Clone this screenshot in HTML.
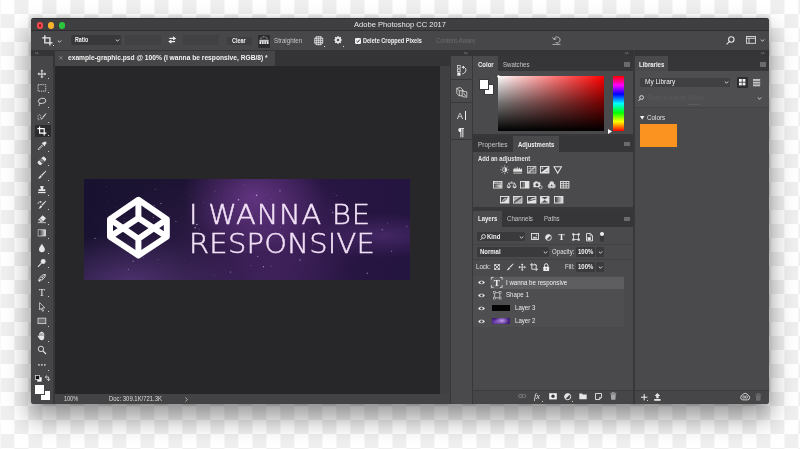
<!DOCTYPE html>
<html lang="en">
<head>
<meta charset="utf-8">
<title>Adobe Photoshop CC 2017</title>
<style>
*{box-sizing:border-box;margin:0;padding:0}
html,body{width:800px;height:449px;overflow:hidden}
body{position:relative;font-family:"Liberation Sans",sans-serif;font-size:7.5px;color:#e6e6e6;
 background-color:#fff;
 background-image:conic-gradient(#efefef 0 25%,#fff 0 50%,#efefef 0 75%,#fff 0);
 background-size:28px 28px;background-position:.4px 0;}
#win{position:absolute;left:31px;top:18px;width:738.3px;height:386px;border-radius:3px;overflow:hidden;background:#38383a;
 }
#shadow{position:absolute;left:31px;top:18px;width:738.3px;height:386px;border-radius:3px;
 box-shadow:0 13px 24px 1px rgba(0,0,0,.40),0 0 4px rgba(0,0,0,.2);}
#in{position:absolute;left:-31px;top:-18px;width:800px;height:449px;filter:blur(.45px);will-change:transform}
.a{position:absolute}
.t{position:absolute;white-space:nowrap;line-height:10px;height:10px;font-size:6.8px;transform-origin:0 50%;transform:scaleX(var(--sx,.9))}
.b{font-weight:bold;--sx:.88}
svg{position:absolute;overflow:visible}
/* regions */
#title{left:31px;top:18px;width:739px;height:13px;background:#3f3f41;border-bottom:1px solid #2e2e30;border-top:.6px solid #303032}
#opts{left:31px;top:31px;width:739px;height:18.7px;background:#474749}
#strip{left:31px;top:49.7px;width:739px;height:6.5px;background:#343436}
#tools{left:31px;top:56px;width:21.7px;height:348px;background:#464648}
#tabbar{left:52.7px;top:50px;width:397px;height:15.5px;background:#343436}
#tab{left:54.5px;top:50.5px;width:220px;height:15px;background:#464648}
#canvas{left:54.5px;top:65.5px;width:385.5px;height:328px;background:#272729}
#status{left:54.5px;top:393.5px;width:395px;height:10.5px;background:#434345}
#gap1{left:440px;top:65.5px;width:9.5px;height:328px;background:#404042}
#icons{left:451px;top:56px;width:20.5px;height:348px;background:#4a4a4c}
.pbar{background:#363638}
.pbody{background:#4a4a4c}
.ptab{background:#4a4a4c}
.field{background:#3a3a3c;border-radius:1.5px}
</style>
</head>
<body>
<div id="shadow"></div>
<div id="win"><div id="in">

<!-- title bar -->
<div class="a" id="title"></div>
<div class="a" style="left:37px;top:22.4px;width:6.2px;height:6.2px;border-radius:50%;background:#fc4a4e"></div>
<div class="a" style="left:38.9px;top:24.3px;width:2.4px;height:2.4px;border-radius:50%;background:#8e1418"></div>
<div class="a" style="left:48px;top:22.4px;width:6.2px;height:6.2px;border-radius:50%;background:#fdb22b"></div>
<div class="a" style="left:59.1px;top:22.4px;width:6.2px;height:6.2px;border-radius:50%;background:#2bc63c"></div>
<div class="t" id="ttl" style="left:353.8px;top:19.8px;font-size:7.6px;color:#eaeaea;--sx:.995">Adobe Photoshop CC 2017</div>

<!-- options bar -->
<div class="a" id="opts"></div>

<!-- strip + tools -->
<div class="a" id="strip"></div>
<div class="a" id="tools"></div>

<!-- document -->
<div class="a" id="tabbar"></div>
<div class="a" id="tab"></div>
<div class="a" id="canvas"></div>
<div class="a" id="status"></div>

<!-- right side -->
<div class="a" id="gap1"></div>
<div class="a" id="icons"></div>

<!-- COLOR PANEL -->
<div class="a pbar" style="left:473px;top:56px;width:159.5px;height:15px"></div>
<div class="a ptab" style="left:473px;top:56px;width:25px;height:15px"></div>
<div class="a pbody" style="left:473px;top:71px;width:159.5px;height:63px"></div>
<div class="t b" style="left:478px;top:59.5px;color:#f0f0f0">Color</div>
<div class="t" style="left:503px;top:59.5px;color:#c8c8c8">Swatches</div>
<div class="a" style="left:623.5px;top:62px;width:6px;height:4.5px;background:#6a6a6c"></div>
<!-- fg/bg swatches -->
<div class="a" style="left:483.5px;top:84px;width:10.5px;height:10.5px;background:#fff;border:.7px solid #3a3a3c"></div>
<div class="a" style="left:478.5px;top:79px;width:10.5px;height:10.5px;background:#fff;border:.7px solid #3a3a3c"></div>
<!-- picker -->
<div class="a" style="left:498px;top:76px;width:106px;height:55px;background:linear-gradient(to bottom,rgba(0,0,0,0),rgba(0,0,0,.56) 50%,#000),linear-gradient(to right,#fff,#f00)"></div>
<div class="a" style="left:497px;top:75px;width:3px;height:3px;border-radius:50%;border:.7px solid #fff"></div>
<div class="a" style="left:612.5px;top:76px;width:11.5px;height:55px;background:linear-gradient(to bottom,#f00 0%,#f0f 17%,#00f 33%,#0ff 50%,#0f0 67%,#ff0 83%,#f00 100%)"></div>
<svg style="left:607.5px;top:128.5px" width="4" height="5" viewBox="0 0 4 5"><path d="M0 0L4 2.5L0 5z" fill="#fff"/></svg>

<!-- ADJUSTMENTS PANEL -->
<div class="a pbar" style="left:473px;top:135.5px;width:159.5px;height:16px"></div>
<div class="a ptab" style="left:513px;top:135.5px;width:46px;height:16px"></div>
<div class="a pbody" style="left:473px;top:151.5px;width:159.5px;height:55px"></div>
<div class="t" style="left:478px;top:139.5px;color:#c8c8c8;--sx:.95">Properties</div>
<div class="t b" style="left:518px;top:139.5px;color:#f0f0f0">Adjustments</div>
<div class="a" style="left:623.5px;top:141.5px;width:6px;height:4.5px;background:#6a6a6c"></div>
<div class="t b" style="left:478px;top:153.8px;font-size:6.6px;color:#e4e4e4">Add an adjustment</div>

<!-- LAYERS PANEL -->
<div class="a pbar" style="left:473px;top:210.5px;width:159.5px;height:16.5px"></div>
<div class="a ptab" style="left:473px;top:210.5px;width:29px;height:16.5px"></div>
<div class="a pbody" style="left:473px;top:227px;width:159.5px;height:177px"></div>
<div class="t b" style="left:478px;top:214px;color:#f0f0f0">Layers</div>
<div class="t" style="left:506.5px;top:214px;color:#c8c8c8">Channels</div>
<div class="t" style="left:543.5px;top:214px;color:#c8c8c8">Paths</div>
<div class="a" style="left:623.5px;top:216.5px;width:6px;height:4.5px;background:#6a6a6c"></div>

<!-- LIBRARIES PANEL -->
<div class="a" style="left:632.5px;top:50px;width:2.5px;height:354px;background:#38383a"></div>
<div class="a pbar" style="left:635px;top:56px;width:135px;height:15px"></div>
<div class="a ptab" style="left:635px;top:56px;width:33px;height:15px"></div>
<div class="a pbody" style="left:635px;top:71px;width:135px;height:333px"></div>
<div class="t b" style="left:639px;top:59.5px;color:#f0f0f0">Libraries</div>
<div class="a" style="left:759.5px;top:62px;width:6px;height:4.5px;background:#6a6a6c"></div>

<!-- OPTIONS BAR CONTENT -->
<svg style="left:42px;top:35px" width="11" height="11" viewBox="0 0 11 11" fill="none" stroke="#e8e8e8" stroke-width="1.3"><path d="M2.8 0.3V7.8H10.6M0.2 2.8H7.9V10.6"/></svg>
<div class="a" style="left:53px;top:45px;width:1.2px;height:1.2px;background:#ddd"></div>
<svg style="left:57px;top:39.5px" width="5" height="3" viewBox="0 0 5 3" fill="none" stroke="#d4d4d4" stroke-width="1"><path d="M.8 .5L2.5 2.2L4.2 .5"/></svg>
<div class="a field" style="left:70.8px;top:34.8px;width:50px;height:10.6px;background:#38383a"></div>
<div class="t b" style="left:75px;top:35.2px;color:#f0f0f0;--sx:.78">Ratio</div>
<svg style="left:115px;top:39.2px" width="5" height="3" viewBox="0 0 5 3" fill="none" stroke="#d4d4d4" stroke-width="1"><path d="M.8 .5L2.5 2.2L4.2 .5"/></svg>
<div class="a field" style="left:125.2px;top:35px;width:36px;height:10.2px;background:#414143"></div>
<svg style="left:167.8px;top:36px" width="8.4" height="8" viewBox="0 0 9 8"><path d="M1.4 2.3H6" stroke="#f0f0f0" stroke-width="1.3"/><path d="M5.4 0L8.8 2.3L5.4 4.6z" fill="#f0f0f0"/><path d="M7.6 5.7H3" stroke="#f0f0f0" stroke-width="1.3"/><path d="M3.6 3.4L.2 5.7L3.6 8z" fill="#f0f0f0"/></svg>
<div class="a field" style="left:183px;top:35px;width:36px;height:10.2px;background:#414143"></div>
<div class="a field" style="left:226.6px;top:36.6px;width:25.4px;height:8.6px;background:#3f3f41"></div>
<div class="t b" style="left:232.2px;top:36px;color:#f0f0f0;--sx:.8">Clear</div>
<div class="a" style="left:257.5px;top:35.2px;width:12.3px;height:12.4px;background:#2c2c2e;border-radius:1px"></div>
<svg style="left:258.7px;top:36.4px" width="10" height="9" viewBox="0 0 10 9"><path d="M.5 3.8H9.5V8H.5z" fill="#f4f4f4"/><path d="M1.6 3C2.8 0 7.2 0 8.4 3" fill="none" stroke="#e0e0e0" stroke-width=".7" stroke-dasharray="1 .6"/><path d="M2.6 5.4V8M5 5.4V8M7.4 5.4V8" stroke="#2c2c2e" stroke-width=".8"/><path d="M.5 4.9H9.5" stroke="#2c2c2e" stroke-width=".4"/></svg>
<div class="t" style="left:274px;top:36.2px;color:#c6c6c6;--sx:.91">Straighten</div>
<svg style="left:314.3px;top:36.4px" width="9.4" height="9.4" viewBox="0 0 10 10" fill="none" stroke="#e4e4e4" stroke-width=".85"><path d="M2.9 .2V9.8M5 .2V9.8M7.1 .2V9.8M.2 2.9H9.8M.2 5H9.8M.2 7.1H9.8"/><rect x=".8" y=".8" width="8.4" height="8.4" rx="2.6"/></svg>
<div class="a" style="left:323.5px;top:46px;width:1.2px;height:1.2px;background:#ddd"></div>
<svg style="left:333.5px;top:36.3px" width="8" height="8" viewBox="0 0 8 8"><circle cx="4" cy="4" r="2.3" fill="none" stroke="#ececec" stroke-width="1.5"/><path d="M4 0V8M0 4H8M1.2 1.2L6.8 6.8M6.8 1.2L1.2 6.8" stroke="#ececec" stroke-width="1.2"/><circle cx="4" cy="4" r="1.2" fill="#474749"/></svg>
<div class="a" style="left:342.5px;top:46px;width:1.2px;height:1.2px;background:#ddd"></div>
<div class="a" style="left:354.6px;top:37.6px;width:6.2px;height:6.2px;background:#f2f2f2;border-radius:1.2px"></div>
<svg style="left:355.7px;top:38.7px" width="4.2" height="4.2" viewBox="0 0 4 4" fill="none" stroke="#222" stroke-width=".9"><path d="M.5 2L1.6 3.1L3.6 .6"/></svg>
<div class="t b" style="left:363px;top:36.2px;color:#f0f0f0;--sx:.82">Delete Cropped Pixels</div>
<div class="t" style="left:436px;top:36.2px;color:#6c6c6e;--sx:.875">Content-Aware</div>
<svg style="left:552px;top:36px" width="9" height="9" viewBox="0 0 9 9" fill="none" stroke="#bdbdbd" stroke-width=".9"><path d="M2.2 3.2A3 3 0 1 1 3.6 6.6"/><path d="M.6 1.4L2 3.6L4.4 2.8" /><path d="M.5 8.4H8.5"/></svg>
<svg style="left:726px;top:35.8px" width="9" height="9" viewBox="0 0 9 9" fill="none" stroke="#e4e4e4" stroke-width="1.1"><circle cx="5.3" cy="3.5" r="2.7"/><path d="M3.4 5.6L.6 8.4"/></svg>
<svg style="left:745.5px;top:36.3px" width="10" height="8" viewBox="0 0 10 8" fill="none" stroke="#dcdcdc" stroke-width=".9"><rect x=".5" y=".5" width="9" height="6.8"/><path d="M.5 2.3H9.5M3 2.3V7.3"/></svg>
<svg style="left:760px;top:39.3px" width="5" height="3" viewBox="0 0 5 3" fill="none" stroke="#d4d4d4" stroke-width="1"><path d="M.8 .5L2.5 2.2L4.2 .5"/></svg>

<!-- strip handles -->
<svg style="left:34.6px;top:51.8px" width="3.6" height="2.4" viewBox="0 0 3.6 2.4" fill="none" stroke="#9a9a9c" stroke-width=".6"><path d="M.3 .2L1.3 1.2L.3 2.2M2.1 .2L3.1 1.2L2.1 2.2"/></svg>
<svg style="left:464.4px;top:51.8px" width="3.6" height="2.4" viewBox="0 0 3.6 2.4" fill="none" stroke="#9a9a9c" stroke-width=".6"><path d="M.3 .2L1.3 1.2L.3 2.2M2.1 .2L3.1 1.2L2.1 2.2"/></svg>
<svg style="left:625px;top:51.8px" width="3.6" height="2.4" viewBox="0 0 3.6 2.4" fill="none" stroke="#9a9a9c" stroke-width=".6"><path d="M.3 .2L1.3 1.2L.3 2.2M2.1 .2L3.1 1.2L2.1 2.2"/></svg>
<svg style="left:760.8px;top:51.8px" width="3.6" height="2.4" viewBox="0 0 3.6 2.4" fill="none" stroke="#9a9a9c" stroke-width=".6"><path d="M.3 .2L1.3 1.2L.3 2.2M2.1 .2L3.1 1.2L2.1 2.2"/></svg>

<!-- DOC TAB -->
<svg style="left:58.6px;top:56.2px" width="3.8" height="3.8" viewBox="0 0 4 4" stroke="#a0a0a2" stroke-width=".7"><path d="M.3 .3L3.7 3.7M3.7 .3L.3 3.7"/></svg>
<div class="t b" id="doctitle" style="left:67.8px;top:53.2px;font-size:7.5px;color:#f2f2f2;--sx:.888">example-graphic.psd @ 100% (I wanna be responsive, RGB/8) *</div>

<!-- STATUS -->
<div class="t" style="left:64px;top:393.8px;font-size:6.3px;color:#dcdcdc;--sx:.87">100%</div>
<div class="t" style="left:109px;top:393.8px;font-size:6.3px;color:#dcdcdc;--sx:.94">Doc: 309.1K/721.3K</div>
<svg style="left:185px;top:396.5px" width="3" height="5" viewBox="0 0 3 5" fill="none" stroke="#cfcfcf" stroke-width=".7"><path d="M.4 .4L2.4 2.5L.4 4.6"/></svg>

<!-- TOOLS -->
<div class="a" style="left:34.5px;top:125px;width:16px;height:11.5px;background:#2c2c2e;border-radius:1px"></div>
<svg style="left:36.6px;top:68.7px" width="9.8" height="9.8" viewBox="0 0 12 12"><path d="M6 .6L7.9 2.8H6.6V5.4H9.2V4.1L11.4 6L9.2 7.9V6.6H6.6V9.2H7.9L6 11.4L4.1 9.2H5.4V6.6H2.8V7.9L.6 6L2.8 4.1V5.4H5.4V2.8H4.1z" fill="#e6e6e6"/></svg>
<div class="a" style="left:48.3px;top:78.2px;width:1.1px;height:1.1px;background:#d0d0d0"></div>
<svg style="left:36.6px;top:82.7px" width="9.8" height="9.8" viewBox="0 0 12 12"><rect x="1.3" y="2" width="9.4" height="8" fill="none" stroke="#e6e6e6" stroke-width="1" stroke-dasharray="1.7 1"/></svg>
<div class="a" style="left:48.3px;top:92.2px;width:1.1px;height:1.1px;background:#d0d0d0"></div>
<svg style="left:36.6px;top:97.4px" width="9.8" height="9.8" viewBox="0 0 12 12"><ellipse cx="6.3" cy="4.8" rx="4.6" ry="3.2" fill="none" stroke="#e6e6e6" stroke-width="1" transform="rotate(-12 6 5)"/><path d="M3.4 7.4C2.2 8.6 3.4 9.6 2.4 11" fill="none" stroke="#e6e6e6" stroke-width="1"/></svg>
<div class="a" style="left:48.3px;top:106.9px;width:1.1px;height:1.1px;background:#d0d0d0"></div>
<svg style="left:36.6px;top:112.1px" width="9.8" height="9.8" viewBox="0 0 12 12"><path d="M1.3 4.6C1.3 2.6 4.3 2.6 4.5 4.4C4.8 7 3.6 9.6 1.3 9.6z" fill="none" stroke="#e6e6e6" stroke-width=".8" stroke-dasharray="1.2 .8"/><path d="M10.9 1.6L11.5 2.2L7.6 7L6.6 6.2z" fill="#e6e6e6"/><path d="M6.2 6.6L7.3 7.5C6.6 9.2 5.2 9.4 4.2 9.3C5.2 8.6 5.2 7.4 6.2 6.6z" fill="#e6e6e6"/></svg>
<div class="a" style="left:48.3px;top:121.6px;width:1.1px;height:1.1px;background:#d0d0d0"></div>
<svg style="left:36.6px;top:125.7px" width="9.8" height="9.8" viewBox="0 0 12 12"><path d="M3.2 .6V8.7H11.5M.5 3.2H8.8V11.5" fill="none" stroke="#fff" stroke-width="1.4"/></svg>
<div class="a" style="left:48.3px;top:135.2px;width:1.1px;height:1.1px;background:#d0d0d0"></div>
<svg style="left:36.6px;top:141.1px" width="9.8" height="9.8" viewBox="0 0 12 12"><path d="M8.2 1.2C9.2 .2 10.6 .4 11.2 1.2C11.8 2 11.8 3.2 10.8 3.9L9.6 5L10.2 5.6L9.4 6.4L5.6 2.6L6.4 1.8L7 2.4z" fill="#e6e6e6"/><path d="M6.6 4.4L2 9L1.4 10.6L3 10L7.6 5.4" fill="none" stroke="#e6e6e6" stroke-width=".9"/></svg>
<div class="a" style="left:48.3px;top:150.6px;width:1.1px;height:1.1px;background:#d0d0d0"></div>
<svg style="left:36.6px;top:155.5px" width="9.8" height="9.8" viewBox="0 0 12 12"><g transform="rotate(-45 6 6)"><rect x=".4" y="3.2" width="11.2" height="5.6" rx="1.6" fill="#e6e6e6"/><rect x="4" y="3.2" width="4" height="5.6" fill="#474749"/><circle cx="5.2" cy="5" r=".5" fill="#e6e6e6"/><circle cx="6.8" cy="5" r=".5" fill="#e6e6e6"/><circle cx="5.2" cy="7" r=".5" fill="#e6e6e6"/><circle cx="6.8" cy="7" r=".5" fill="#e6e6e6"/><circle cx="6" cy="6" r=".5" fill="#e6e6e6"/></g></svg>
<div class="a" style="left:48.3px;top:165.0px;width:1.1px;height:1.1px;background:#d0d0d0"></div>
<svg style="left:36.6px;top:170.1px" width="9.8" height="9.8" viewBox="0 0 12 12"><path d="M10.6 .8L11.3 1.5L6.2 7.2L5 6z" fill="#e6e6e6"/><path d="M4.5 6.5L5.8 7.8C5 10 3 10.8 1 10.8C2.6 9.6 2.8 7.6 4.5 6.5z" fill="#e6e6e6"/></svg>
<div class="a" style="left:48.3px;top:179.6px;width:1.1px;height:1.1px;background:#d0d0d0"></div>
<svg style="left:36.6px;top:185.1px" width="9.8" height="9.8" viewBox="0 0 12 12"><path d="M4.6 1.2H7.4C8 1.2 8.2 1.8 8 2.4L7.3 5.2H10.2V7.4H1.8V5.2H4.7L4 2.4C3.8 1.8 4 1.2 4.6 1.2z" fill="#e6e6e6"/><rect x="1.4" y="8.4" width="9.2" height="1.6" fill="#e6e6e6"/></svg>
<div class="a" style="left:48.3px;top:194.6px;width:1.1px;height:1.1px;background:#d0d0d0"></div>
<svg style="left:36.6px;top:199.5px" width="9.8" height="9.8" viewBox="0 0 12 12"><path d="M10.6 .8L11.3 1.5L6.6 7L5.4 5.8z" fill="#e6e6e6"/><path d="M4.9 6.3L6.2 7.6C5.4 9.8 3.6 10.6 1.6 10.6C3.2 9.4 3.2 7.4 4.9 6.3z" fill="#e6e6e6"/><path d="M1 4.8C1.4 2.6 3.4 1.6 5.2 2.4" fill="none" stroke="#e6e6e6" stroke-width=".9"/><path d="M4.2 .9L6 2.7L3.7 3.4z" fill="#e6e6e6"/></svg>
<div class="a" style="left:48.3px;top:209.0px;width:1.1px;height:1.1px;background:#d0d0d0"></div>
<svg style="left:36.6px;top:214.1px" width="9.8" height="9.8" viewBox="0 0 12 12"><path d="M6.8 1.4L11 5.2L7.2 9.4H3.6L1.4 7.4z" fill="#e6e6e6"/><path d="M3.2 5.4L7.6 9.2" stroke="#474749" stroke-width=".9"/><path d="M4 7L2.3 8.5L3.6 9.4" fill="#474749"/><path d="M1 10.6H11" stroke="#e6e6e6" stroke-width=".9"/></svg>
<div class="a" style="left:48.3px;top:223.6px;width:1.1px;height:1.1px;background:#d0d0d0"></div>
<svg style="left:36.6px;top:228.3px" width="9.8" height="9.8" viewBox="0 0 12 12"><defs><linearGradient id="gg" x1="0" x2="1" y1="0" y2="0"><stop offset="0" stop-color="#1c1c1e"/><stop offset="1" stop-color="#e8e8e8"/></linearGradient></defs><rect x="1.4" y="2.2" width="9.2" height="7.6" fill="url(#gg)" stroke="#e6e6e6" stroke-width=".8"/></svg>
<div class="a" style="left:48.3px;top:237.8px;width:1.1px;height:1.1px;background:#d0d0d0"></div>
<svg style="left:36.6px;top:243.1px" width="9.8" height="9.8" viewBox="0 0 12 12"><path d="M6 1C7.4 3.6 9.6 5.6 9.6 7.8A3.6 3.6 0 0 1 2.4 7.8C2.4 5.6 4.6 3.6 6 1z" fill="#e6e6e6"/></svg>
<div class="a" style="left:48.3px;top:252.6px;width:1.1px;height:1.1px;background:#d0d0d0"></div>
<svg style="left:36.6px;top:257.5px" width="9.8" height="9.8" viewBox="0 0 12 12"><circle cx="7.6" cy="4.2" r="3" fill="#e6e6e6"/><path d="M5.4 6.4L1.2 10.8" stroke="#e6e6e6" stroke-width="1.3"/></svg>
<div class="a" style="left:48.3px;top:267.0px;width:1.1px;height:1.1px;background:#d0d0d0"></div>
<svg style="left:36.6px;top:272.9px" width="9.8" height="9.8" viewBox="0 0 12 12"><g transform="rotate(45 6 6)"><path d="M6 0C8.4 2.6 8.8 5.6 7.4 8.6H4.6C3.2 5.6 3.6 2.6 6 0z" fill="none" stroke="#e6e6e6" stroke-width="1"/><path d="M6 .6V4.6" stroke="#e6e6e6" stroke-width=".8"/><circle cx="6" cy="5.4" r="1" fill="#e6e6e6"/><rect x="4.4" y="9.4" width="3.2" height="2" fill="#e6e6e6"/></g></svg>
<div class="a" style="left:48.3px;top:282.4px;width:1.1px;height:1.1px;background:#d0d0d0"></div>
<svg style="left:36.6px;top:286.9px" width="9.8" height="9.8" viewBox="0 0 12 12"><text x="6" y="10.4" text-anchor="middle" font-family="Liberation Serif,serif" font-size="12.5" fill="#e6e6e6">T</text></svg>
<div class="a" style="left:48.3px;top:296.4px;width:1.1px;height:1.1px;background:#d0d0d0"></div>
<svg style="left:36.6px;top:301.7px" width="9.8" height="9.8" viewBox="0 0 12 12"><path d="M3.2 .8L9.6 7.2H6.2L8 10.8L6.8 11.4L5 7.8L3.2 9.8z" fill="#3a3a3c" stroke="#e6e6e6" stroke-width=".9" stroke-linejoin="round"/></svg>
<div class="a" style="left:48.3px;top:311.2px;width:1.1px;height:1.1px;background:#d0d0d0"></div>
<svg style="left:36.6px;top:316.1px" width="9.8" height="9.8" viewBox="0 0 12 12"><rect x="1.2" y="2.6" width="9.6" height="6.8" fill="#6a6a6c" stroke="#e6e6e6" stroke-width=".9"/></svg>
<div class="a" style="left:48.3px;top:325.6px;width:1.1px;height:1.1px;background:#d0d0d0"></div>
<svg style="left:36.6px;top:331.3px" width="9.8" height="9.8" viewBox="0 0 12 12"><path d="M2.8 6.6V3.2C2.8 2.4 4 2.4 4 3.2V1.8C4 1 5.2 1 5.2 1.8V1.2C5.2 .4 6.4 .4 6.4 1.2V1.8C6.4 1 7.6 1 7.6 1.8V3C7.6 2.2 8.8 2.2 8.8 3V7.6C8.8 10 7.8 11.2 6 11.2C4.2 11.2 3.4 10.4 2.4 8.8L1 6.6C.6 5.8 1.6 5.2 2.2 6z" fill="#e6e6e6"/><path d="M4 3.4V6M5.2 2.6V6M6.4 2.6V6M7.6 3.4V6" stroke="#474749" stroke-width=".5"/></svg>
<div class="a" style="left:48.3px;top:340.8px;width:1.1px;height:1.1px;background:#d0d0d0"></div>
<svg style="left:36.6px;top:345.3px" width="9.8" height="9.8" viewBox="0 0 12 12"><circle cx="4.8" cy="4.8" r="3.3" fill="none" stroke="#e6e6e6" stroke-width="1.1"/><path d="M7.2 7.2L11 11" stroke="#e6e6e6" stroke-width="1.5"/></svg>
<svg style="left:36.6px;top:360.1px" width="9.8" height="9.8" viewBox="0 0 12 12"><circle cx="2.4" cy="6" r="1" fill="#e6e6e6"/><circle cx="6" cy="6" r="1" fill="#e6e6e6"/><circle cx="9.6" cy="6" r="1" fill="#e6e6e6"/></svg>
<div class="a" style="left:48.3px;top:369.6px;width:1.1px;height:1.1px;background:#d0d0d0"></div>
<svg style="left:34.5px;top:374.5px" width="7" height="7" viewBox="0 0 7 7"><rect x="2.4" y="2.4" width="4" height="4" fill="#fff" stroke="#ddd" stroke-width=".5"/><rect x=".5" y=".5" width="4" height="4" fill="#111" stroke="#e6e6e6" stroke-width=".7"/></svg>
<svg style="left:43.5px;top:374.5px" width="7" height="7" viewBox="0 0 7 7" fill="none" stroke="#e6e6e6" stroke-width=".8"><path d="M1.6 2H4.6V5.4"/><path d="M2.8 .6L1.2 2L2.8 3.4M3.2 4L4.6 5.8L6 4" /></svg>
<div class="a" style="left:40px;top:390px;width:10.5px;height:10.5px;background:#fff;border:.7px solid #474749"></div>
<div class="a" style="left:34px;top:384.3px;width:10.7px;height:10.7px;background:#fff;border:.7px solid #474749"></div>

<!-- CANVAS IMAGE -->
<div class="a" id="art" style="left:83.7px;top:179.3px;width:326.8px;height:100.7px;overflow:hidden;background:
radial-gradient(ellipse 22% 55% at 52% 18%,rgba(108,58,140,.8),rgba(100,52,132,0) 100%),
radial-gradient(ellipse 30% 60% at 58% 55%,rgba(86,44,114,.6),rgba(86,44,114,0) 100%),
radial-gradient(ellipse 22% 22% at 92% 56%,rgba(92,54,128,.55),rgba(92,54,128,0) 100%),
radial-gradient(ellipse 34% 50% at 14% 104%,rgba(88,56,122,.85),rgba(88,56,122,0) 100%),
radial-gradient(ellipse 30% 45% at 55% 108%,rgba(74,40,104,.6),rgba(74,40,104,0) 100%),
radial-gradient(ellipse 30% 60% at 30% 60%,rgba(60,34,86,.35),rgba(60,34,86,0) 100%),
linear-gradient(to right,#181230 0%,#1d1333 30%,#2a1644 60%,#241440 100%)">
<svg style="left:0;top:0" width="326.8" height="100.7" viewBox="0 0 326.8 100.7"><circle cx="106.6" cy="16.6" r="0.35" fill="#e9d8ff" opacity="0.28"/><circle cx="175.1" cy="37.5" r="0.35" fill="#e9d8ff" opacity="0.66"/><circle cx="71.3" cy="10.3" r="0.60" fill="#e9d8ff" opacity="0.28"/><circle cx="31.3" cy="43.2" r="0.80" fill="#e9d8ff" opacity="0.31"/><circle cx="74.1" cy="62.9" r="0.35" fill="#e9d8ff" opacity="0.51"/><circle cx="130.1" cy="96.7" r="0.35" fill="#e9d8ff" opacity="0.50"/><circle cx="45.0" cy="42.7" r="0.80" fill="#e9d8ff" opacity="0.30"/><circle cx="101.6" cy="81.2" r="0.40" fill="#e9d8ff" opacity="0.30"/><circle cx="186.5" cy="20.2" r="0.35" fill="#e9d8ff" opacity="0.50"/><circle cx="22.3" cy="7.8" r="0.40" fill="#e9d8ff" opacity="0.47"/><circle cx="173.7" cy="77.4" r="0.60" fill="#e9d8ff" opacity="0.51"/><circle cx="148.4" cy="31.1" r="0.40" fill="#e9d8ff" opacity="0.56"/><circle cx="80.8" cy="57.7" r="0.80" fill="#e9d8ff" opacity="0.47"/><circle cx="112.9" cy="45.5" r="0.80" fill="#e9d8ff" opacity="0.69"/><circle cx="40.1" cy="42.6" r="0.50" fill="#e9d8ff" opacity="0.32"/><circle cx="159.9" cy="5.8" r="0.35" fill="#e9d8ff" opacity="0.59"/><circle cx="187.1" cy="86.9" r="0.50" fill="#e9d8ff" opacity="0.40"/><circle cx="115.1" cy="50.2" r="0.60" fill="#e9d8ff" opacity="0.28"/><circle cx="32.2" cy="28.2" r="0.35" fill="#e9d8ff" opacity="0.28"/><circle cx="228.6" cy="64.8" r="0.60" fill="#e9d8ff" opacity="0.38"/><circle cx="126.6" cy="66.9" r="0.35" fill="#e9d8ff" opacity="0.67"/><circle cx="116.8" cy="61.3" r="0.60" fill="#e9d8ff" opacity="0.28"/><circle cx="250.1" cy="14.5" r="0.40" fill="#e9d8ff" opacity="0.43"/><circle cx="298.1" cy="50.2" r="0.40" fill="#e9d8ff" opacity="0.45"/><circle cx="179.5" cy="87.7" r="0.60" fill="#e9d8ff" opacity="0.64"/><circle cx="91.9" cy="42.3" r="0.50" fill="#e9d8ff" opacity="0.56"/><circle cx="124.9" cy="24.4" r="0.35" fill="#e9d8ff" opacity="0.33"/><circle cx="76.9" cy="24.6" r="0.60" fill="#e9d8ff" opacity="0.62"/><circle cx="60.9" cy="29.3" r="0.40" fill="#e9d8ff" opacity="0.44"/><circle cx="121.3" cy="56.9" r="0.40" fill="#e9d8ff" opacity="0.56"/><circle cx="168.5" cy="61.9" r="0.35" fill="#e9d8ff" opacity="0.46"/><circle cx="283.3" cy="94.3" r="0.80" fill="#e9d8ff" opacity="0.43"/><circle cx="130.9" cy="12.0" r="0.60" fill="#e9d8ff" opacity="0.28"/><circle cx="23.8" cy="22.3" r="0.40" fill="#e9d8ff" opacity="0.30"/><circle cx="196.0" cy="11.9" r="0.80" fill="#e9d8ff" opacity="0.32"/><circle cx="34.8" cy="37.3" r="0.35" fill="#e9d8ff" opacity="0.28"/><circle cx="69.2" cy="38.5" r="0.50" fill="#e9d8ff" opacity="0.68"/><circle cx="196.5" cy="48.0" r="0.35" fill="#e9d8ff" opacity="0.63"/><circle cx="322.8" cy="47.2" r="0.60" fill="#e9d8ff" opacity="0.39"/><circle cx="48.5" cy="74.7" r="0.50" fill="#e9d8ff" opacity="0.47"/><circle cx="225.5" cy="52.1" r="0.40" fill="#e9d8ff" opacity="0.68"/><circle cx="172.6" cy="16.2" r="0.80" fill="#e9d8ff" opacity="0.66"/><circle cx="246.9" cy="30.9" r="0.35" fill="#e9d8ff" opacity="0.56"/><circle cx="86.3" cy="37.6" r="0.40" fill="#e9d8ff" opacity="0.41"/><circle cx="74.0" cy="54.5" r="0.80" fill="#e9d8ff" opacity="0.40"/><circle cx="74.0" cy="80.7" r="0.40" fill="#e9d8ff" opacity="0.61"/><circle cx="266.3" cy="73.8" r="0.40" fill="#e9d8ff" opacity="0.34"/><circle cx="161.2" cy="72.9" r="0.35" fill="#e9d8ff" opacity="0.61"/><circle cx="154.5" cy="20.8" r="0.80" fill="#e9d8ff" opacity="0.68"/><circle cx="146.5" cy="92.9" r="0.50" fill="#e9d8ff" opacity="0.68"/><circle cx="119.8" cy="23.4" r="0.40" fill="#e9d8ff" opacity="0.46"/><circle cx="111.1" cy="48.8" r="0.80" fill="#e9d8ff" opacity="0.63"/><circle cx="156.9" cy="65.3" r="0.35" fill="#e9d8ff" opacity="0.63"/><circle cx="40.7" cy="39.7" r="0.40" fill="#e9d8ff" opacity="0.47"/><circle cx="59.7" cy="78.5" r="0.50" fill="#e9d8ff" opacity="0.29"/><circle cx="307.6" cy="72.0" r="0.60" fill="#e9d8ff" opacity="0.43"/><circle cx="307.8" cy="72.3" r="0.40" fill="#e9d8ff" opacity="0.70"/><circle cx="10.9" cy="59.3" r="0.60" fill="#e9d8ff" opacity="0.61"/><circle cx="49.2" cy="82.2" r="0.60" fill="#e9d8ff" opacity="0.55"/><circle cx="115.2" cy="55.2" r="0.40" fill="#e9d8ff" opacity="0.26"/><circle cx="260.2" cy="72.5" r="0.35" fill="#e9d8ff" opacity="0.49"/><circle cx="303.6" cy="44.1" r="0.40" fill="#e9d8ff" opacity="0.62"/><circle cx="70.2" cy="26.4" r="0.50" fill="#e9d8ff" opacity="0.48"/><circle cx="248.7" cy="33.6" r="0.80" fill="#e9d8ff" opacity="0.44"/><circle cx="44.3" cy="90.3" r="0.50" fill="#e9d8ff" opacity="0.65"/><circle cx="216.0" cy="81.1" r="0.80" fill="#e9d8ff" opacity="0.44"/><circle cx="298.4" cy="50.7" r="0.80" fill="#e9d8ff" opacity="0.32"/><circle cx="166.9" cy="86.7" r="0.40" fill="#e9d8ff" opacity="0.52"/><circle cx="252.7" cy="16.5" r="0.40" fill="#e9d8ff" opacity="0.46"/><circle cx="236.2" cy="56.0" r="0.50" fill="#e9d8ff" opacity="0.56"/></svg>
</div>
<svg style="left:0;top:0" width="800" height="449" viewBox="0 0 800 449" fill="none" stroke="#fff" stroke-width="6" stroke-linejoin="round" stroke-linecap="round">
<path d="M138.4 199.7L166.8 219.2V236.7L138.4 255.4L110 236.7V219.2z"/>
<path d="M110 219.2L138.4 238.7L166.8 219.2M110 236.7L138.4 218L166.8 236.7M138.4 199.7V218M138.4 238.7V255.4" stroke-linecap="butt"/>
</svg>
<div class="a" id="h1" style="left:188.8px;top:199.4px;-webkit-text-stroke:.45px #f1e0f6;font-family:'DejaVu Sans','Liberation Sans',sans-serif;font-weight:200;font-size:25.8px;line-height:32px;white-space:nowrap;color:#f1e0f6;letter-spacing:.72px;transform-origin:0 0;transform:scaleX(1.12)">I WANNA BE</div>
<div class="a" id="h2" style="left:188.8px;top:227.8px;-webkit-text-stroke:.45px #f1e0f6;font-family:'DejaVu Sans','Liberation Sans',sans-serif;font-weight:200;font-size:25.8px;line-height:32px;white-space:nowrap;color:#f1e0f6;letter-spacing:.25px;transform-origin:0 0;transform:scaleX(1.12)">RESPONSIVE</div>

<!-- ICON STRIP -->
<div class="a" style="left:451px;top:78.6px;width:21px;height:1px;background:#38383a"></div>
<div class="a" style="left:451px;top:102.4px;width:21px;height:1px;background:#38383a"></div>
<div class="a" style="left:451px;top:139.2px;width:21px;height:1px;background:#38383a"></div>
<svg style="left:456.5px;top:64.5px" width="10" height="11" viewBox="0 0 10 11"><rect x=".6" y=".5" width="2.6" height="2.6" fill="none" stroke="#e6e6e6" stroke-width=".7"/><rect x=".6" y="4.1" width="2.6" height="2.6" fill="none" stroke="#e6e6e6" stroke-width=".7"/><rect x=".3" y="7.5" width="3.2" height="3.2" fill="#f0f0f0"/><path d="M5.4 2.2C8 1.6 9.6 4 8.6 6.2C8 7.6 6.8 8.6 5.4 9" fill="none" stroke="#e6e6e6" stroke-width="1"/><path d="M4.6 2.4L7 .6V3.8z" fill="#e6e6e6"/></svg>
<svg style="left:455.5px;top:86.5px" width="12" height="11" viewBox="0 0 12 11" fill="none" stroke="#e0e0e0" stroke-width=".8"><path d="M.8 1.2L4.6 .6L7.2 3.4V8.4L3.4 9L.8 6.2z"/><path d="M.8 1.2L3.4 4V9M3.4 4L7.2 3.4"/><path d="M6.2 4.2L10.8 4.8V10.2L6.2 9.6z" fill="#4a4a4c"/><path d="M7.4 5.8L9.6 9"/></svg>
<div class="t" style="left:457.4px;top:110.6px;font-size:9.4px;color:#f0f0f0;--sx:.95">A</div>
<div class="a" style="left:464.8px;top:111px;width:.9px;height:9px;background:#f0f0f0"></div>
<div class="t b" style="left:458px;top:126.8px;font-size:10.5px;color:#f0f0f0;--sx:1.1">¶</div>

<!-- ADJUSTMENT ICONS -->
<svg style="left:499.7px;top:165.9px" width="9.4" height="7.5" viewBox="0 0 10 8"><circle cx="5" cy="4" r="2.3" fill="none" stroke="#e4e4e4" stroke-width=".8"/><path d="M5 1.7A2.3 2.3 0 0 1 5 6.3z" fill="#e4e4e4"/><path d="M5 -.8V.6M5 7.4V8.8M.2 4H1.6M8.4 4H9.8M1.6 .6L2.6 1.6M7.4 6.4L8.4 7.4M8.4 .6L7.4 1.6M2.6 6.4L1.6 7.4" stroke="#e4e4e4" stroke-width=".7"/></svg>
<svg style="left:513.4px;top:165.9px" width="9.4" height="7.5" viewBox="0 0 10 8"><path d="M.3 6.2V4L1.3 1.8L2.2 4L3.2 1L4.2 4L5 .4L5.9 4L6.9 1.4L7.8 4L8.8 2L9.7 4V6.2z" fill="#e4e4e4"/><path d="M.3 7.6H9.7" stroke="#e4e4e4" stroke-width=".8"/></svg>
<svg style="left:526.7px;top:165.9px" width="9.4" height="7.5" viewBox="0 0 10 8"><rect x=".5" y=".5" width="9" height="7" fill="none" stroke="#e4e4e4" stroke-width=".8"/><path d="M3.5 .5V7.5M6.5 .5V7.5M.5 2.8H9.5M.5 5.2H9.5" stroke="#e4e4e4" stroke-width=".5"/><path d="M.8 7.2C4.5 6.6 5.5 1.6 9.2 .8" fill="none" stroke="#e4e4e4" stroke-width=".9"/></svg>
<svg style="left:540.2px;top:165.9px" width="9.4" height="7.5" viewBox="0 0 10 8"><rect x=".5" y=".5" width="9" height="7" fill="none" stroke="#e4e4e4" stroke-width="1"/><path d="M.5 7.5L9.5 .5V7.5z" fill="#e4e4e4"/><path d="M1.6 2.4H3.6M2.6 1.4V3.4" stroke="#e4e4e4" stroke-width=".6"/><path d="M6.2 5.8H8.2" stroke="#4a4a4c" stroke-width=".6"/></svg>
<svg style="left:553.1px;top:165.9px" width="9.4" height="7.5" viewBox="0 0 10 8"><path d="M1 .8H9L5 7.6z" fill="none" stroke="#e4e4e4" stroke-width="1.1"/></svg>
<svg style="left:492.9px;top:180.9px" width="9.4" height="7.5" viewBox="0 0 10 8"><rect x=".5" y=".5" width="9" height="7" fill="none" stroke="#e4e4e4" stroke-width="1"/><path d="M.5 2.2H9.5" stroke="#e4e4e4" stroke-width="1.2"/><path d="M3.3 .5V2.2M6.3 .5V2.2" stroke="#4a4a4c" stroke-width=".6"/><defs><linearGradient id="hs" x1="0" x2="1"><stop offset="0" stop-color="#555"/><stop offset="1" stop-color="#eee"/></linearGradient></defs><rect x="1" y="3.6" width="8" height="3.4" fill="url(#hs)"/></svg>
<svg style="left:506.7px;top:180.9px" width="9.4" height="7.5" viewBox="0 0 10 8"><path d="M5 .4V2M1.6 2.2H8.4" stroke="#e4e4e4" stroke-width=".9"/><path d="M.2 5.6L1.8 2.4L3.6 5.6A1.7 1.7 0 0 1 .2 5.6zM6.4 5.6L8.2 2.4L9.8 5.6A1.7 1.7 0 0 1 6.4 5.6z" fill="none" stroke="#e4e4e4" stroke-width=".8"/><path d="M.3 5.8H3.5A1.6 1.6 0 0 1 .3 5.8zM6.5 5.8H9.7A1.6 1.6 0 0 1 6.5 5.8z" fill="#e4e4e4"/></svg>
<svg style="left:519.9px;top:180.9px" width="9.4" height="7.5" viewBox="0 0 10 8"><rect x=".5" y=".5" width="9" height="7" fill="none" stroke="#e4e4e4" stroke-width="1"/><rect x="5" y=".5" width="4.5" height="7" fill="#e4e4e4"/><path d="M3.4 .5V7.5" stroke="#e4e4e4" stroke-width=".5"/></svg>
<svg style="left:533.1px;top:180.9px" width="9.4" height="7.5" viewBox="0 0 10 8"><rect x=".4" y="1.4" width="7.4" height="5.2" rx=".6" fill="#e4e4e4"/><rect x="2" y=".4" width="3" height="1.4" fill="#e4e4e4"/><circle cx="4.2" cy="4" r="1.6" fill="#4a4a4c"/><circle cx="8" cy="6.6" r="1.7" fill="#4a4a4c" stroke="#e4e4e4" stroke-width=".8"/></svg>
<svg style="left:546.6px;top:180.9px" width="9.4" height="7.5" viewBox="0 0 10 8"><circle cx="5" cy="2.8" r="2.5" fill="#e4e4e4" opacity=".95"/><circle cx="3.2" cy="5.4" r="2.5" fill="#e4e4e4" opacity=".8"/><circle cx="6.8" cy="5.4" r="2.5" fill="#e4e4e4" opacity=".8"/><circle cx="5" cy="4.6" r=".9" fill="#4a4a4c"/></svg>
<svg style="left:560.4px;top:180.9px" width="9.4" height="7.5" viewBox="0 0 10 8"><rect x=".5" y=".5" width="9" height="7" fill="none" stroke="#e4e4e4" stroke-width="1"/><path d="M3.5 .5V7.5M6.5 .5V7.5M.5 2.8H9.5M.5 5.2H9.5" stroke="#e4e4e4" stroke-width=".9"/></svg>
<svg style="left:499.7px;top:196.2px" width="9.4" height="7.5" viewBox="0 0 10 8"><rect x=".5" y=".5" width="9" height="7" fill="none" stroke="#e4e4e4" stroke-width="1"/><path d="M9.5 .5V7.5H.5z" fill="#e4e4e4"/><path d="M3 5.6C3.4 3.6 5 2.4 7 2.4" stroke="#e4e4e4" stroke-width="1" fill="none"/><path d="M3 5.6C5 5.6 6.6 4.4 7 2.4" stroke="#4a4a4c" stroke-width="1" fill="none"/></svg>
<svg style="left:513.4px;top:196.2px" width="9.4" height="7.5" viewBox="0 0 10 8"><rect x=".5" y=".5" width="9" height="7" fill="#9a9a9c" stroke="#e4e4e4" stroke-width="1"/><path d="M1 7L9 1" stroke="#4a4a4c" stroke-width="1.2"/><path d="M1 4.6L5 1.4M5 6.8L9 3.6" stroke="#c8c8c8" stroke-width=".9"/></svg>
<svg style="left:526.7px;top:196.2px" width="9.4" height="7.5" viewBox="0 0 10 8"><rect x=".5" y=".5" width="9" height="7" fill="none" stroke="#e4e4e4" stroke-width="1"/><path d="M.5 7.5V4.6L3 4.2L5.4 2.4L9.5 1.6V7.5z" fill="#e4e4e4"/><path d="M1 5.4L9 3.4" stroke="#4a4a4c" stroke-width="1"/></svg>
<svg style="left:540.2px;top:196.2px" width="9.4" height="7.5" viewBox="0 0 10 8"><rect x=".5" y=".5" width="9" height="7" fill="none" stroke="#e4e4e4" stroke-width="1"/><path d="M.5 .5L5 4L.5 7.5zM9.5 .5L5 4L9.5 7.5z" fill="#e4e4e4"/><path d="M.5 .5L9.5 7.5M9.5 .5L.5 7.5" stroke="#e4e4e4" stroke-width=".6"/></svg>
<svg style="left:553.7px;top:196.2px" width="9.4" height="7.5" viewBox="0 0 10 8"><defs><linearGradient id="gm" x1="0" x2="1"><stop offset="0" stop-color="#2e2e30"/><stop offset="1" stop-color="#f0f0f0"/></linearGradient></defs><rect x=".5" y=".5" width="9" height="7" fill="url(#gm)" stroke="#e4e4e4" stroke-width="1"/></svg>

<!-- LAYERS CONTENT -->
<div class="a field" style="left:477.4px;top:232.4px;width:47.6px;height:8.8px"></div>
<svg style="left:479.6px;top:233.6px" width="6" height="6.4" viewBox="0 0 6 6.4" fill="none" stroke="#e6e6e6" stroke-width=".9"><circle cx="3.6" cy="2.5" r="1.9"/><path d="M2.3 3.9L.4 6"/></svg>
<div class="t b" style="left:487.3px;top:231.8px;color:#f0f0f0">Kind</div>
<svg style="left:519.1px;top:235.6px" width="5" height="3" viewBox="0 0 5 3" fill="none" stroke="#d4d4d4" stroke-width="1"><path d="M.8 .5L2.5 2.2L4.2 .5"/></svg>
<svg style="left:530.8px;top:233.4px" width="8" height="7" viewBox="0 0 8 7"><rect x=".5" y=".5" width="7" height="6" fill="none" stroke="#e6e6e6" stroke-width=".9"/><path d="M1.4 5.4L3 3.4L4.2 4.6L5.2 3.8L6.6 5.4z" fill="#e6e6e6"/><circle cx="5.4" cy="2.2" r=".6" fill="#e6e6e6"/></svg>
<svg style="left:545.2px;top:233.5px" width="7" height="7" viewBox="0 0 7 7"><circle cx="3.5" cy="3.5" r="2.9" fill="none" stroke="#e6e6e6" stroke-width=".9"/><path d="M1.45 5.55A2.9 2.9 0 0 1 5.55 1.45z" fill="#e6e6e6"/></svg>
<div class="t b" style="left:558.6px;top:231.8px;font-family:'Liberation Serif',serif;font-size:9px;color:#f0f0f0;--sx:1">T</div>
<svg style="left:571.6px;top:233.0px" width="8" height="8" viewBox="0 0 8 8"><rect x="1.6" y="1.6" width="4.8" height="4.8" fill="none" stroke="#e6e6e6" stroke-width=".8"/><rect x=".3" y=".3" width="2" height="2" fill="#e6e6e6"/><rect x="5.7" y=".3" width="2" height="2" fill="#e6e6e6"/><rect x=".3" y="5.7" width="2" height="2" fill="#e6e6e6"/><rect x="5.7" y="5.7" width="2" height="2" fill="#e6e6e6"/></svg>
<svg style="left:585.8px;top:232.8px" width="7" height="8.4" viewBox="0 0 7 8.4"><path d="M.5 .5H4.4L6.5 2.6V7.9H.5z" fill="none" stroke="#e6e6e6" stroke-width=".9"/><path d="M4.2 .5V2.8H6.5" fill="none" stroke="#e6e6e6" stroke-width=".7"/><rect x="1.6" y="4.2" width="3.2" height="3" fill="#e6e6e6"/></svg>
<div class="a" style="left:600.3px;top:233.6px;width:4px;height:8px;border-radius:2px;background:#38383a"></div>
<div class="a" style="left:600.1px;top:231.9px;width:4.4px;height:4.4px;border-radius:50%;background:#f0f0f0"></div>
<div class="a" style="left:473px;top:243.6px;width:159.5px;height:.8px;background:#414143"></div>

<div class="a field" style="left:477.4px;top:247.2px;width:71.4px;height:9.6px"></div>
<div class="t b" style="left:479.6px;top:247px;color:#f0f0f0">Normal</div>
<svg style="left:543.0px;top:250.8px" width="5" height="3" viewBox="0 0 5 3" fill="none" stroke="#d4d4d4" stroke-width="1"><path d="M.8 .5L2.5 2.2L4.2 .5"/></svg>
<div class="t" style="left:551.8px;top:247px;color:#e0e0e0">Opacity:</div>
<div class="a field" style="left:576.3px;top:247.2px;width:18.4px;height:9.6px"></div>
<div class="t b" style="left:578.3px;top:247px;color:#f0f0f0">100%</div>
<div class="a field" style="left:596.4px;top:247.2px;width:7.6px;height:9.6px"></div>
<svg style="left:597.7px;top:250.8px" width="5" height="3" viewBox="0 0 5 3" fill="none" stroke="#d4d4d4" stroke-width="1"><path d="M.8 .5L2.5 2.2L4.2 .5"/></svg>
<div class="a" style="left:473px;top:259.4px;width:159.5px;height:.8px;background:#414143"></div>

<div class="t" style="left:476px;top:261.8px;color:#e0e0e0">Lock:</div>
<svg style="left:494px;top:263.8px" width="6" height="6" viewBox="0 0 6 6"><rect x=".3" y=".3" width="5.4" height="5.4" fill="none" stroke="#cfcfcf" stroke-width=".6"/><path d="M.3 .3H2.1V2.1H.3zM3.9 .3H5.7V2.1H3.9zM2.1 2.1H3.9V3.9H2.1zM.3 3.9H2.1V5.7H.3zM3.9 3.9H5.7V5.7H3.9z" fill="#d8d8d8"/></svg>
<svg style="left:505.6px;top:262.8px" width="8" height="8" viewBox="0 0 8 8"><path d="M7 .4L7.6 1L4.4 4.8L3.4 3.9z" fill="#e6e6e6"/><path d="M3 4.3L4 5.3C3.4 6.8 2 7.4 .6 7.4C1.8 6.6 1.8 5.1 3 4.3z" fill="#e6e6e6"/></svg>
<svg style="left:517.5px;top:262.6px" width="8.4" height="8.4" viewBox="0 0 12 12"><path d="M6 .6L7.9 2.8H6.6V5.4H9.2V4.1L11.4 6L9.2 7.9V6.6H6.6V9.2H7.9L6 11.4L4.1 9.2H5.4V6.6H2.8V7.9L.6 6L2.8 4.1V5.4H5.4V2.8H4.1z" fill="#e6e6e6"/></svg>
<svg style="left:529.8px;top:263px" width="8" height="8" viewBox="0 0 8 8" fill="none" stroke="#e6e6e6" stroke-width=".9"><path d="M1.8 0V6.2H8M0 1.8H6.2V8"/><path d="M4.6 .6L6.8 2.8" stroke-width=".7"/></svg>
<svg style="left:543.4px;top:262.6px" width="6.4" height="8.4" viewBox="0 0 6.4 8.4"><path d="M1.5 4V2.4A1.7 1.7 0 0 1 4.9 2.4V4" fill="none" stroke="#e6e6e6" stroke-width="1"/><rect x=".3" y="3.8" width="5.8" height="4.3" rx=".5" fill="#f0f0f0"/><rect x="2.8" y="5.2" width=".8" height="1.6" fill="#3a3a3c"/></svg>
<div class="t" style="left:565.2px;top:261.8px;color:#e0e0e0">Fill:</div>
<div class="a field" style="left:576.3px;top:262.2px;width:18.4px;height:9.6px"></div>
<div class="t b" style="left:578.3px;top:261.8px;color:#f0f0f0">100%</div>
<div class="a field" style="left:596.4px;top:262.2px;width:7.6px;height:9.6px"></div>
<svg style="left:597.7px;top:265.8px" width="5" height="3" viewBox="0 0 5 3" fill="none" stroke="#d4d4d4" stroke-width="1"><path d="M.8 .5L2.5 2.2L4.2 .5"/></svg>

<!-- layer rows -->
<div class="a" style="left:473px;top:276.4px;width:151px;height:50.8px;background:#4e4e50"></div>
<div class="a" style="left:490.2px;top:276.6px;width:133.8px;height:12px;background:#5e5e60"></div>
<svg style="left:478.2px;top:280.1px" width="7" height="5" viewBox="0 0 7 5"><path d="M.2 2.5C1.6 .2 5.4 .2 6.8 2.5C5.4 4.8 1.6 4.8 .2 2.5z" fill="#f2f2f2"/><circle cx="3.5" cy="2.5" r="1.25" fill="#3a3a3c"/></svg><svg style="left:478.2px;top:292.7px" width="7" height="5" viewBox="0 0 7 5"><path d="M.2 2.5C1.6 .2 5.4 .2 6.8 2.5C5.4 4.8 1.6 4.8 .2 2.5z" fill="#f2f2f2"/><circle cx="3.5" cy="2.5" r="1.25" fill="#3a3a3c"/></svg><svg style="left:478.2px;top:305.7px" width="7" height="5" viewBox="0 0 7 5"><path d="M.2 2.5C1.6 .2 5.4 .2 6.8 2.5C5.4 4.8 1.6 4.8 .2 2.5z" fill="#f2f2f2"/><circle cx="3.5" cy="2.5" r="1.25" fill="#3a3a3c"/></svg><svg style="left:478.2px;top:318.5px" width="7" height="5" viewBox="0 0 7 5"><path d="M.2 2.5C1.6 .2 5.4 .2 6.8 2.5C5.4 4.8 1.6 4.8 .2 2.5z" fill="#f2f2f2"/><circle cx="3.5" cy="2.5" r="1.25" fill="#3a3a3c"/></svg>
<svg style="left:491px;top:277.2px" width="11.6" height="10.8" viewBox="0 0 11.6 10.8"><path d="M.4 2.6V.4H2.6M9 .4H11.2V2.6M11.2 8.2V10.4H9M2.6 10.4H.4V8.2" fill="none" stroke="#e6e6e6" stroke-width=".8"/><text x="5.8" y="8.6" text-anchor="middle" font-family="Liberation Serif,serif" font-weight="bold" font-size="9" fill="#f2f2f2">T</text></svg>
<div class="t" style="left:505.7px;top:277.6px;color:#f0f0f0">I wanna be responsive</div>
<svg style="left:493px;top:290.8px" width="8.6" height="8.6" viewBox="0 0 8 8"><rect x="1.6" y="1.6" width="4.8" height="4.8" fill="none" stroke="#d8d8d8" stroke-width=".7"/><rect x=".5" y=".5" width="1.8" height="1.8" fill="#4e4e50" stroke="#d8d8d8" stroke-width=".5"/><rect x="5.7" y=".5" width="1.8" height="1.8" fill="#4e4e50" stroke="#d8d8d8" stroke-width=".5"/><rect x=".5" y="5.7" width="1.8" height="1.8" fill="#4e4e50" stroke="#d8d8d8" stroke-width=".5"/><rect x="5.7" y="5.7" width="1.8" height="1.8" fill="#4e4e50" stroke="#d8d8d8" stroke-width=".5"/></svg>
<div class="t" style="left:505.7px;top:290.2px;color:#e8e8e8">Shape 1</div>
<div class="a" style="left:492.3px;top:305px;width:18.2px;height:6.4px;background:#050505"></div>
<div class="t" style="left:514.6px;top:303.2px;color:#e8e8e8">Layer 3</div>
<div class="a" style="left:492.3px;top:317.8px;width:18.2px;height:6.4px;background:radial-gradient(ellipse 40% 70% at 55% 45%,#c79af0,rgba(140,80,200,0) 100%),radial-gradient(ellipse 30% 60% at 20% 70%,#7a4ac0,rgba(100,60,180,0) 100%),#3f1f7a"></div>
<div class="t" style="left:514.6px;top:316px;color:#e8e8e8">Layer 2</div>

<!-- layers bottom bar -->
<div class="a" style="left:473px;top:390.4px;width:159.5px;height:13.6px;background:#464648;border-top:.8px solid #3c3c3e"></div>
<svg style="left:518px;top:394.4px" width="8.4" height="4" viewBox="0 0 8.4 4" fill="none" stroke="#7e7e80" stroke-width=".9"><rect x=".5" y=".5" width="4" height="3" rx="1.5"/><rect x="3.9" y=".5" width="4" height="3" rx="1.5"/></svg>
<div class="t" style="left:534px;top:391px;font-family:'Liberation Serif',serif;font-style:italic;font-size:8.6px;color:#f0f0f0;--sx:.95">fx</div>
<div class="a" style="left:542px;top:400.8px;width:1.1px;height:1.1px;background:#d0d0d0"></div>
<svg style="left:548.6px;top:393.2px" width="8" height="6.6" viewBox="0 0 8 6.6"><rect x=".2" y=".2" width="7.6" height="6.2" fill="#f0f0f0"/><circle cx="4" cy="3.3" r="1.7" fill="#3a3a3c"/></svg>
<svg style="left:564.4px;top:392.8px" width="7.4" height="7.4" viewBox="0 0 7 7"><circle cx="3.5" cy="3.5" r="2.9" fill="none" stroke="#e6e6e6" stroke-width=".9"/><path d="M1.45 5.55A2.9 2.9 0 0 1 5.55 1.45z" fill="#e6e6e6"/></svg>
<div class="a" style="left:572.4px;top:400.8px;width:1.1px;height:1.1px;background:#d0d0d0"></div>
<svg style="left:579px;top:393px" width="8" height="6.6" viewBox="0 0 8 6.6"><path d="M.3 1.6V.4H3L3.8 1.6H7.7V6.3H.3z" fill="#e6e6e6"/></svg>
<svg style="left:594.6px;top:393px" width="7" height="7" viewBox="0 0 7 7"><path d="M.5 .5H6.5V4.6L4.6 6.5H.5z" fill="none" stroke="#e6e6e6" stroke-width=".9"/><path d="M6.5 4.4H4.4V6.5" fill="none" stroke="#e6e6e6" stroke-width=".7"/></svg>
<svg style="left:609.8px;top:392.4px" width="6.6" height="8" viewBox="0 0 6.6 8"><path d="M.2 1.4H6.4M2.3 1.2V.4H4.3V1.2" fill="none" stroke="#a8a8aa" stroke-width=".8"/><path d="M.8 2.2H5.8L5.4 7.7H1.2z" fill="#a8a8aa"/></svg>

<!-- LIBRARIES CONTENT -->
<div class="a" style="left:635px;top:71px;width:135px;height:36px;background:#4e4e50"></div>
<div class="a" style="left:635px;top:106.6px;width:135px;height:.8px;background:#434345"></div>
<div class="a field" style="left:639.6px;top:78.2px;width:90.8px;height:8.8px;background:#404042"></div>
<div class="t" style="left:645px;top:77.4px;font-size:7.2px;color:#f2f2f2">My Library</div>
<svg style="left:724.0px;top:81.4px" width="5" height="3" viewBox="0 0 5 3" fill="none" stroke="#d4d4d4" stroke-width="1"><path d="M.8 .5L2.5 2.2L4.2 .5"/></svg>
<div class="a" style="left:737px;top:77.2px;width:10.8px;height:10.4px;background:#2e2e30;border-radius:1px"></div>
<svg style="left:739.2px;top:79.2px" width="6.4" height="6.4" viewBox="0 0 6.4 6.4" fill="#f4f4f4"><rect x="0" y="0" width="2.8" height="2.8"/><rect x="3.6" y="0" width="2.8" height="2.8"/><rect x="0" y="3.6" width="2.8" height="2.8"/><rect x="3.6" y="3.6" width="2.8" height="2.8"/></svg>
<svg style="left:753px;top:78.6px" width="7.2" height="7.4" viewBox="0 0 7.2 7.4" fill="#c4c4c6"><rect x="0" y="0" width="7.2" height="1.9"/><rect x="0" y="2.7" width="7.2" height="1.9"/><rect x="0" y="5.4" width="7.2" height="1.9"/></svg>
<svg style="left:638.4px;top:95.4px" width="6" height="6.4" viewBox="0 0 6 6.4" fill="none" stroke="#e6e6e6" stroke-width=".9"><circle cx="3.6" cy="2.5" r="1.9"/><path d="M2.3 3.9L.4 6"/></svg>
<div class="t" style="left:647px;top:93.4px;font-size:7px;color:#5a5a5c">Search Adobe Stock</div>
<svg style="left:756.5px;top:97.2px" width="5" height="3" viewBox="0 0 5 3" fill="none" stroke="#d4d4d4" stroke-width="1"><path d="M.8 .5L2.5 2.2L4.2 .5"/></svg>
<div class="a" style="left:688px;top:104px;width:12px;height:.6px;background:#5a5a5c"></div>
<svg style="left:639.8px;top:116px" width="4.4" height="3.8" viewBox="0 0 4 3.4"><path d="M0 0H4L2 3.4z" fill="#f0f0f0"/></svg>
<div class="t" style="left:646.7px;top:113px;font-size:7px;color:#e0e0e0">Colors</div>
<div class="a" style="left:640px;top:123.9px;width:37px;height:23.6px;background:#fa9320"></div>

<div class="a" style="left:635px;top:390px;width:135px;height:14px;background:#464648;border-top:.8px solid #3c3c3e"></div>
<svg style="left:640.6px;top:393.6px" width="6.4" height="6.4" viewBox="0 0 6.4 6.4" stroke="#f0f0f0" stroke-width="1"><path d="M3.2 0V6.4M0 3.2H6.4"/></svg>
<div class="a" style="left:647px;top:400.2px;width:1.2px;height:1px;background:#d0d0d0"></div>
<svg style="left:654.2px;top:392.8px" width="6.8" height="8" viewBox="0 0 6.8 8" fill="#e6e6e6"><path d="M3.4 0L6.2 3H4.6V5.2H2.2V3H.6z"/><rect x=".2" y="6" width="6.4" height="1.8"/></svg>
<svg style="left:739.8px;top:393px" width="10.4" height="7.4" viewBox="0 0 10.4 7.4" fill="none" stroke="#dcdcdc" stroke-width=".9"><path d="M2.8 6.9H7.6A2.3 2.3 0 0 0 8 2.4A3 3 0 0 0 2.4 2.2A2.4 2.4 0 0 0 2.8 6.9z"/><circle cx="3.9" cy="4.1" r="1.2" stroke-width=".7"/><circle cx="6.4" cy="4.1" r="1.2" stroke-width=".7"/></svg>
<svg style="left:754.8px;top:392.8px" width="6.6" height="8" viewBox="0 0 6.6 8"><path d="M.2 1.4H6.4M2.3 1.2V.4H4.3V1.2" fill="none" stroke="#6c6c6e" stroke-width=".8"/><path d="M.8 2.2H5.8L5.4 7.7H1.2z" fill="#6c6c6e"/></svg>

</div></div>
</body>
</html>
